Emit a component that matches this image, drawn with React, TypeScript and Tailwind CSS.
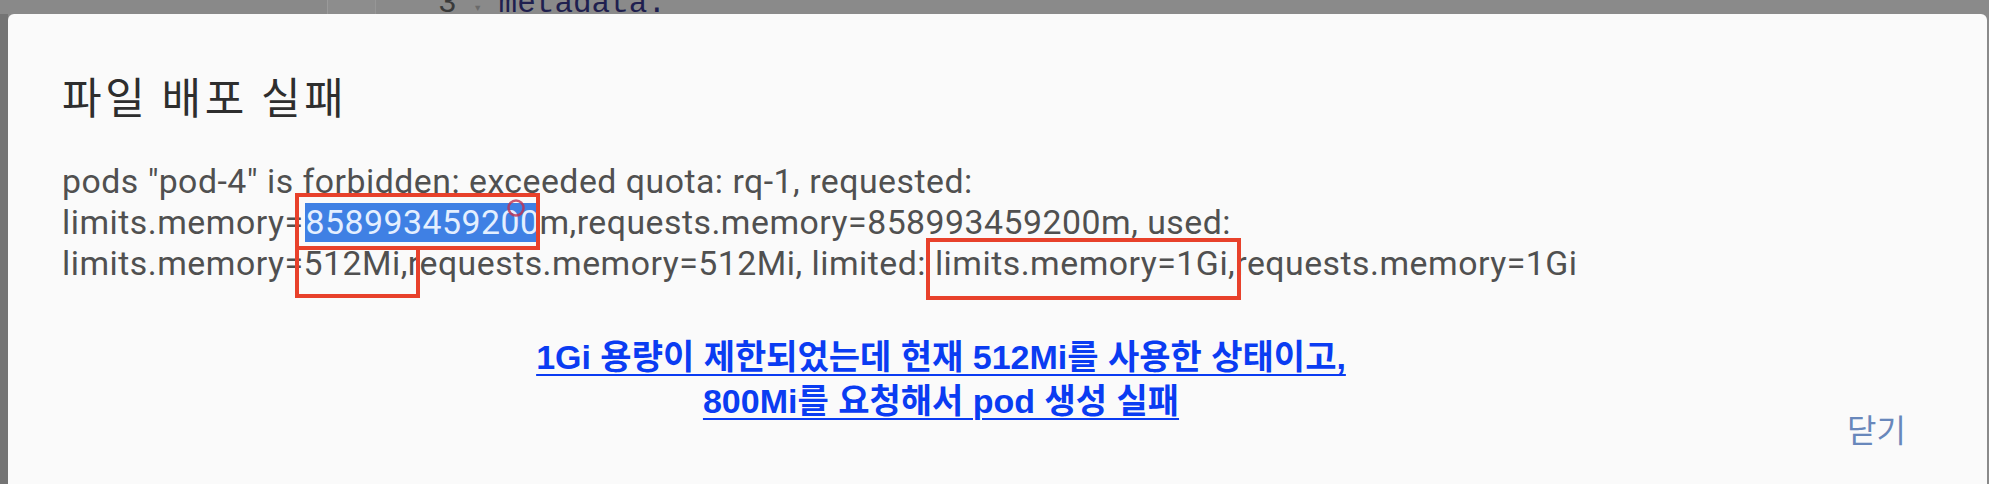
import React from 'react';

const body = '"Roboto", "Noto Sans CJK KR", sans-serif';
const kr = '"Noto Sans CJK KR", "Noto Sans", sans-serif';
const note = '"Liberation Sans", "Noto Sans CJK KR", sans-serif';

const RedBox = ({ className }: { className: string }) => (
  <div className={`absolute border-4 border-[#e8412b] ${className}`} />
);

export default function App() {
  return (
    <div className="relative w-[1989px] h-[484px] overflow-hidden bg-[#8a8a8a] flex flex-col">
      {/* editor behind the overlay */}
      <div className="h-[14px] flex overflow-hidden">
        <div className="w-[327px] bg-[#898989]" />
        <div className="w-[48px] border-l border-[#9a9a9a] bg-[#8d8d8d]" />
        <div className="flex-1 border-l border-[#969696] pl-[62px]">
          <div
            className="-mt-[12px] flex items-baseline text-[31px] leading-[31px] whitespace-pre"
            style={{ fontFamily: '"Liberation Mono", monospace' }}
          >
            <span className="text-[#3a3a3a]">3</span>
            <span className="w-[42px] text-center text-[#6a6a6a] text-[14px]">▾</span>
            <span className="text-[#1f1f4f]">metadata:</span>
          </div>
        </div>
      </div>

      <div className="flex-1 flex">
        <div className="w-[8px] bg-[#747474]" />
        <div className="flex-1 bg-[#fafafa] rounded-t-[6px] flex flex-col pl-[54px] pt-[56px]">
          <h2
            className="text-[43px] leading-[50px] tracking-[3.6px] font-normal text-[#2e2e2e]"
            style={{ fontFamily: kr }}
          >
            파일 배포 실패
          </h2>

          <p
            className="mt-[41px] w-[1580px] text-[33.8px] leading-[41px] tracking-[0.5px] text-[#505050]"
            style={{ fontFamily: body }}
          >
            pods "pod-4" is forbidden: exceeded quota: rq-1, requested: limits.memory=
            <span className="ml-[2px] bg-[#3f80e4] text-[#e4efff]">858993459200</span>
            m,requests.memory=858993459200m, used: limits.memory=512Mi,requests.memory=512Mi, limited:
            limits.memory=1Gi,requests.memory=1Gi
          </p>

          <div className="mt-[51px] flex items-start">
            <div
              className="w-[1758px] text-center text-[34px] leading-[44px] font-bold text-[#0a3cf2] underline underline-offset-[5px] decoration-[2px]"
              style={{ fontFamily: note }}
            >
              1Gi 용량이 제한되었는데 현재 512Mi를 사용한 상태이고,
              <br />
              800Mi를 요청해서 pod 생성 실패
            </div>
            <button
              className="ml-[27px] mt-[73px] text-[32px] leading-[40px] text-[#6887bb]"
              style={{ fontFamily: kr }}
            >
              닫기
            </button>
          </div>
        </div>
        <div className="w-[2px] bg-[#8a8a8a]" />
      </div>

      {/* annotations */}
      <RedBox className="left-[295px] top-[193px] w-[245px] h-[57px]" />
      <RedBox className="left-[295px] top-[246px] w-[125px] h-[52px]" />
      <RedBox className="left-[926px] top-[238px] w-[315px] h-[62px]" />
      <svg className="absolute left-[506px] top-[198px]" width="20" height="20" viewBox="0 0 20 20">
        <circle cx="10" cy="10" r="7.5" fill="none" stroke="#c2304d" strokeOpacity="0.8" strokeWidth="2.5" />
      </svg>
    </div>
  );
}
